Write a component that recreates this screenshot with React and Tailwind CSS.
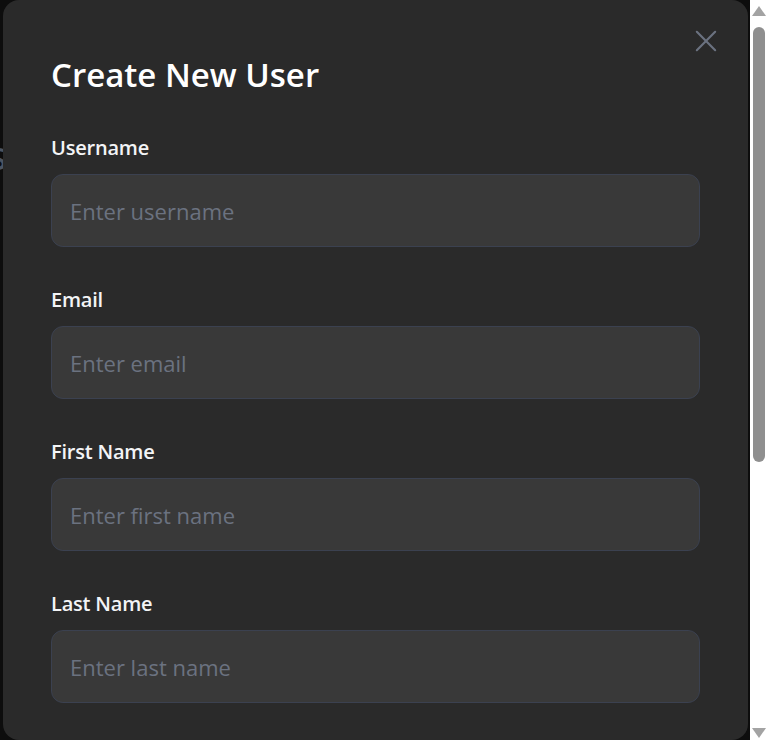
import React from 'react';

const fields = [
  { label: 'Username', placeholder: 'Enter username' },
  { label: 'Email', placeholder: 'Enter email' },
  { label: 'First Name', placeholder: 'Enter first name' },
  { label: 'Last Name', placeholder: 'Enter last name' },
];

const Field = ({ label, placeholder }) => (
  <div className="flex flex-col">
    <label className="text-[20px] leading-[28px] font-semibold tracking-[-0.2px] text-[#f3f4f6]">{label}</label>
    <input
      type="text"
      placeholder={placeholder}
      className="mt-3 h-[73px] w-full rounded-xl border border-[#3b4150] bg-[#393939] px-[18px] text-[22px] text-white placeholder:text-[#6b7280] outline-none"
    />
  </div>
);

// fake page scrollbar (headless browser hides the real one)
const Scrollbar = () => (
  <div className="w-[17px] shrink-0 bg-white flex flex-col items-center">
    <div className="mt-[6px] w-0 h-0 border-x-[7px] border-x-transparent border-b-[10px] border-b-[#a3a3a3]" />
    <div className="mt-[11px] w-[12px] h-[435px] rounded-full bg-[#8f8f8f]" />
    <div className="flex-1" />
    <div className="mb-[2px] w-0 h-0 border-x-[7px] border-x-transparent border-t-[10px] border-t-[#a3a3a3]" />
  </div>
);

const App = () => {
  return (
    <div
      className="h-[740px] overflow-hidden bg-[#0d0d0d] flex"
      style={{ fontFamily: '"Open Sans", "Noto Sans", sans-serif' }}
    >
      {/* page behind the overlay */}
      <div className="w-[3px] overflow-hidden shrink-0">
        <div className="mt-[144px] -ml-[10px] text-[30px] leading-none font-semibold text-[#4b5563]">S</div>
      </div>

      <div className="relative w-[745px] h-[740px] shrink-0 rounded-2xl bg-[#2a2a2a] overflow-hidden px-12 pt-[54px]">
        <button className="absolute right-[31px] top-[30px] text-[#6b7280]">
          <svg width="22" height="22" viewBox="0 0 24 24" fill="none" stroke="currentColor" strokeWidth="2.3" strokeLinecap="round">
            <path d="M2 2 L22 22 M22 2 L2 22" />
          </svg>
        </button>

        <h2 className="text-[33px] leading-[41px] font-semibold text-white">Create New User</h2>

        <div className="mt-[39px] flex flex-col gap-[39px]">
          {fields.map((f) => (
            <Field key={f.label} label={f.label} placeholder={f.placeholder} />
          ))}
        </div>
      </div>

      <div className="w-[2px] shrink-0" />
      <Scrollbar />
    </div>
  );
};

export default App;
